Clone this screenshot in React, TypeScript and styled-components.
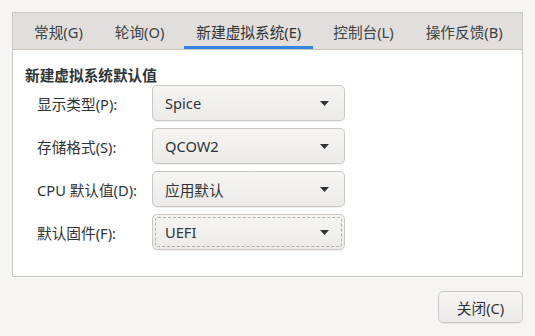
import React from "react";
import styled, { createGlobalStyle } from "styled-components";

const Global = createGlobalStyle`
  html, body { margin: 0; padding: 0; background: #f6f5f4; }
  body {
    font-family: "Noto Sans", "Noto Sans CJK SC", sans-serif;
    font-size: 14.67px;
    color: #2e3436;
  }
  * { box-sizing: border-box; }
`;

const Window = styled.div`
  width: 535px;
  height: 336px;
  padding: 12px 12px 0 12px;
  display: flex;
  flex-direction: column;
  background: #f6f5f4;
`;

const Notebook = styled.div`
  height: 265px;
  border: 1px solid #cdc7c2;
  background: #ffffff;
  display: flex;
  flex-direction: column;
`;

const TabBar = styled.div`
  height: 37px;
  background: #e1dedb;
  border-bottom: 1px solid #cdc7c2;
  display: flex;
  align-items: stretch;
  gap: 8px;
  padding-left: 9px;
`;

const Tab = styled.div<{ $active?: boolean }>`
  padding: 0 12px;
  display: flex;
  align-items: center;
  white-space: nowrap;
  color: ${(p) => (p.$active ? "#2e3436" : "#3d4244")};
  box-shadow: ${(p) => (p.$active ? "inset 0 -3px 0 #3584e4" : "none")};
`;

const Page = styled.div`
  padding: 16px 12px 0 12px;
  display: flex;
  flex-direction: column;
`;

const Heading = styled.div`
  font-weight: bold;
  line-height: 18px;
  height: 19px;
`;

const Form = styled.div`
  display: grid;
  grid-template-columns: 115px 193px;
  row-gap: 7px;
  padding-left: 12px;
  align-items: center;
`;

const Label = styled.div`
  white-space: nowrap;
`;

const Combo = styled.div<{ $focused?: boolean }>`
  height: 36px;
  border: 1px solid #cdc7c2;
  border-radius: 5px;
  background: linear-gradient(#f6f5f4, #edebe9);
  box-shadow: 0 1px 0 rgba(0, 0, 0, 0.05);
  display: flex;
  align-items: center;
  justify-content: space-between;
  padding: 0 15px 0 12px;
  position: relative;
  &::after {
    content: "";
    display: ${(p) => (p.$focused ? "block" : "none")};
    position: absolute;
    inset: 2px;
    border: 1px dashed rgba(46, 52, 54, 0.35);
    border-radius: 3px;
    pointer-events: none;
  }
`;

const Arrow = styled.svg`
  width: 9px;
  height: 5px;
`;

const Footer = styled.div`
  display: flex;
  justify-content: flex-end;
  padding-top: 14px;
`;

const Button = styled.div`
  width: 85px;
  height: 32px;
  border: 1px solid #cdc7c2;
  border-radius: 5px;
  background: linear-gradient(#f6f5f4, #edebe9);
  box-shadow: 0 1px 0 rgba(0, 0, 0, 0.05);
  display: flex;
  align-items: center;
  justify-content: center;
`;

const rows = [
  { label: "显示类型(P):", value: "Spice" },
  { label: "存储格式(S):", value: "QCOW2" },
  { label: "CPU 默认值(D):", value: "应用默认" },
  { label: "默认固件(F):", value: "UEFI", focused: true },
];

const tabs = ["常规(G)", "轮询(O)", "新建虚拟系统(E)", "控制台(L)", "操作反馈(B)"];

export default function App() {
  return (
    <>
      <Global />
      <Window>
        <Notebook>
          <TabBar>
            {tabs.map((t, i) => (
              <Tab key={t} $active={i === 2}>
                {t}
              </Tab>
            ))}
          </TabBar>
          <Page>
            <Heading>新建虚拟系统默认值</Heading>
            <Form>
              {rows.map((r) => (
                <React.Fragment key={r.label}>
                  <Label>{r.label}</Label>
                  <Combo $focused={r.focused}>
                    <span>{r.value}</span>
                    <Arrow viewBox="0 0 9 5">
                      <path d="M0 0 L9 0 L4.5 5 Z" fill="#2e3436" />
                    </Arrow>
                  </Combo>
                </React.Fragment>
              ))}
            </Form>
          </Page>
        </Notebook>
        <Footer>
          <Button>关闭(C)</Button>
        </Footer>
      </Window>
    </>
  );
}
